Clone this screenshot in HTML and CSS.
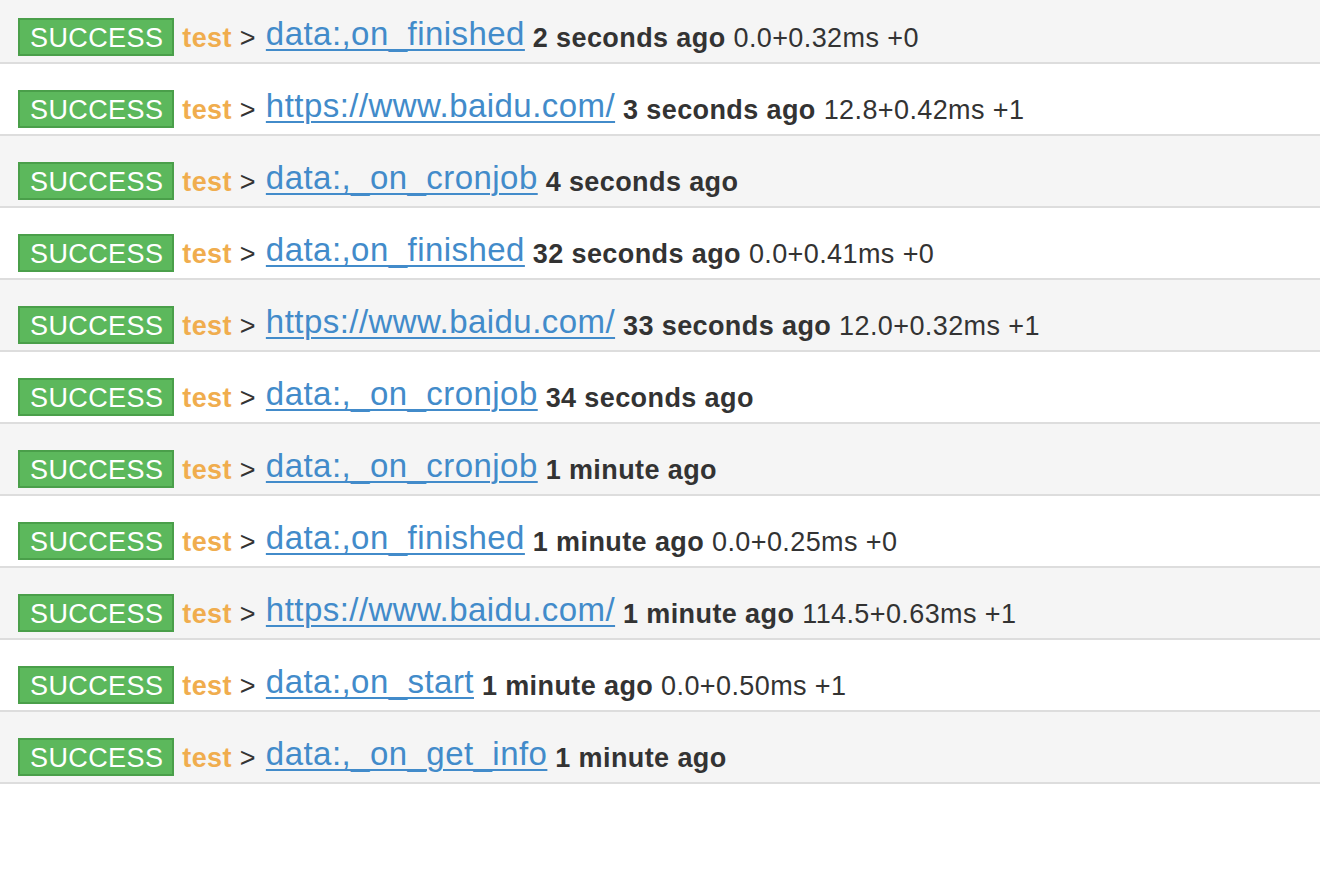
FILE: index.html
```html
<!DOCTYPE html>
<html>
<head>
<meta charset="utf-8">
<link rel="stylesheet" href="styles.css">
</head>
<body>
<div class="list">
  <div class="row"><span class="badge">SUCCESS</span> <span class="name">test</span> <span class="sep">&gt;</span> <a class="link" href="#">data:,on_finished</a> <b class="ago">2 seconds ago</b> <span class="stats">0.0+0.32ms +0</span></div>
  <div class="row"><span class="badge">SUCCESS</span> <span class="name">test</span> <span class="sep">&gt;</span> <a class="link" href="#">https://www.baidu.com/</a> <b class="ago">3 seconds ago</b> <span class="stats">12.8+0.42ms +1</span></div>
  <div class="row"><span class="badge">SUCCESS</span> <span class="name">test</span> <span class="sep">&gt;</span> <a class="link" href="#">data:,_on_cronjob</a> <b class="ago">4 seconds ago</b></div>
  <div class="row"><span class="badge">SUCCESS</span> <span class="name">test</span> <span class="sep">&gt;</span> <a class="link" href="#">data:,on_finished</a> <b class="ago">32 seconds ago</b> <span class="stats">0.0+0.41ms +0</span></div>
  <div class="row"><span class="badge">SUCCESS</span> <span class="name">test</span> <span class="sep">&gt;</span> <a class="link" href="#">https://www.baidu.com/</a> <b class="ago">33 seconds ago</b> <span class="stats">12.0+0.32ms +1</span></div>
  <div class="row"><span class="badge">SUCCESS</span> <span class="name">test</span> <span class="sep">&gt;</span> <a class="link" href="#">data:,_on_cronjob</a> <b class="ago">34 seconds ago</b></div>
  <div class="row"><span class="badge">SUCCESS</span> <span class="name">test</span> <span class="sep">&gt;</span> <a class="link" href="#">data:,_on_cronjob</a> <b class="ago">1 minute ago</b></div>
  <div class="row"><span class="badge">SUCCESS</span> <span class="name">test</span> <span class="sep">&gt;</span> <a class="link" href="#">data:,on_finished</a> <b class="ago">1 minute ago</b> <span class="stats">0.0+0.25ms +0</span></div>
  <div class="row"><span class="badge">SUCCESS</span> <span class="name">test</span> <span class="sep">&gt;</span> <a class="link" href="#">https://www.baidu.com/</a> <b class="ago">1 minute ago</b> <span class="stats">114.5+0.63ms +1</span></div>
  <div class="row"><span class="badge">SUCCESS</span> <span class="name">test</span> <span class="sep">&gt;</span> <a class="link" href="#">data:,on_start</a> <b class="ago">1 minute ago</b> <span class="stats">0.0+0.50ms +1</span></div>
  <div class="row"><span class="badge">SUCCESS</span> <span class="name">test</span> <span class="sep">&gt;</span> <a class="link" href="#">data:,_on_get_info</a> <b class="ago">1 minute ago</b></div>
</div>
</body>
</html>
```

FILE: styles.css
```css
html, body {
  margin: 0;
  padding: 0;
  background: #fff;
}

body {
  font-family: "Liberation Sans", Arial, Helvetica, sans-serif;
  color: #333;
}

.list {
  display: block;
}

.row {
  font-size: 27px;
  line-height: 1;
  letter-spacing: 0.4px;
  white-space: nowrap;
  padding: 26px 0 6px 18px;
  border-bottom: 2px solid #dddddd;
  background: #fff;
}

.row:nth-child(odd) {
  background: #f5f5f5;
}

.row:first-child {
  padding-top: 18px;
}

.badge {
  display: inline-block;
  vertical-align: baseline;
  background: #5cb85c;
  border: 2px solid #4a9f4a;
  color: #fff;
  padding: 5px 9px 2px 10px;
  line-height: 27px;
}

.name {
  color: #f0ad4e;
  font-weight: bold;
}

.sep {
  color: #333;
  padding-right: 2px;
}

.link {
  font-size: 33px;
  line-height: 27px;
  letter-spacing: 0.45px;
  color: #428bca;
  text-decoration: underline;
  text-decoration-thickness: 2px;
  text-underline-offset: 4px;
  vertical-align: 2px;
}

.ago {
  font-weight: bold;
  color: #333;
}

.stats {
  color: #333;
}
```
